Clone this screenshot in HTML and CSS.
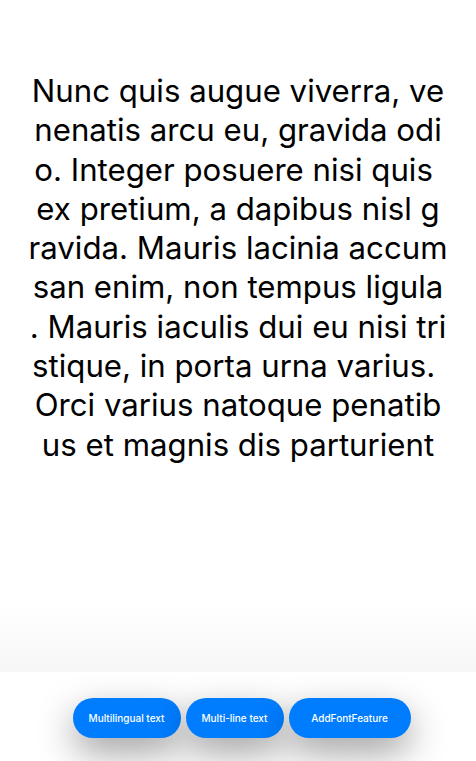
FILE: index.html
```html
<!DOCTYPE html>
<html>
<head>
<meta charset="utf-8">
<link rel="stylesheet" href="styles.css">
</head>
<body>
<main class="page">
  <section class="content">
    <p class="para">Nunc quis augue viverra, ve<br>nenatis arcu eu, gravida odi<br>o. Integer posuere nisi quis <br>ex pretium, a dapibus nisl g<br>ravida. Mauris lacinia accum<br>san enim, non tempus ligula<br>. Mauris iaculis dui eu nisi tri<br>stique, in porta urna varius. <br>Orci varius natoque penatib<br>us et magnis dis parturient</p>
  </section>
  <nav class="bar">
    <button class="btn b1">Multilingual text</button>
    <button class="btn b2">Multi-line text</button>
    <button class="btn b3">AddFontFeature</button>
  </nav>
</main>
</body>
</html>
```
FILE: styles.css
```css
html, body {
  margin: 0;
  padding: 0;
  background: #ffffff;
}
.page {
  width: 476px;
  height: 761px;
  display: flex;
  flex-direction: column;
  font-family: Inter, "Noto Sans", sans-serif;
}
.content {
  height: 672px;
  box-sizing: border-box;
  padding: 72px 10px 0 10px;
  background: linear-gradient(to bottom, #ffffff 0, #ffffff 600px, #f6f6f6 672px);
}
.para {
  margin: 0;
  font-size: 31.2px;
  line-height: 39.3px;
  color: #000;
  text-align: center;
  white-space: pre;
}
.bar {
  flex: 1;
  display: flex;
  justify-content: center;
  align-items: flex-start;
  gap: 5px;
  padding: 26px 0 0 7px;
  background: #fff;
}
.btn {
  height: 40px;
  border: none;
  border-radius: 20px;
  background: #007dff;
  color: #fff;
  font-family: Inter, "Noto Sans", sans-serif;
  font-size: 10px;
  font-weight: 500;
  padding: 0;
  box-shadow: 0 14px 36px rgba(0, 0, 0, 0.38);
}
.b1 { width: 108px; }
.b2 { width: 98px; }
.b3 { width: 122px; }
```
